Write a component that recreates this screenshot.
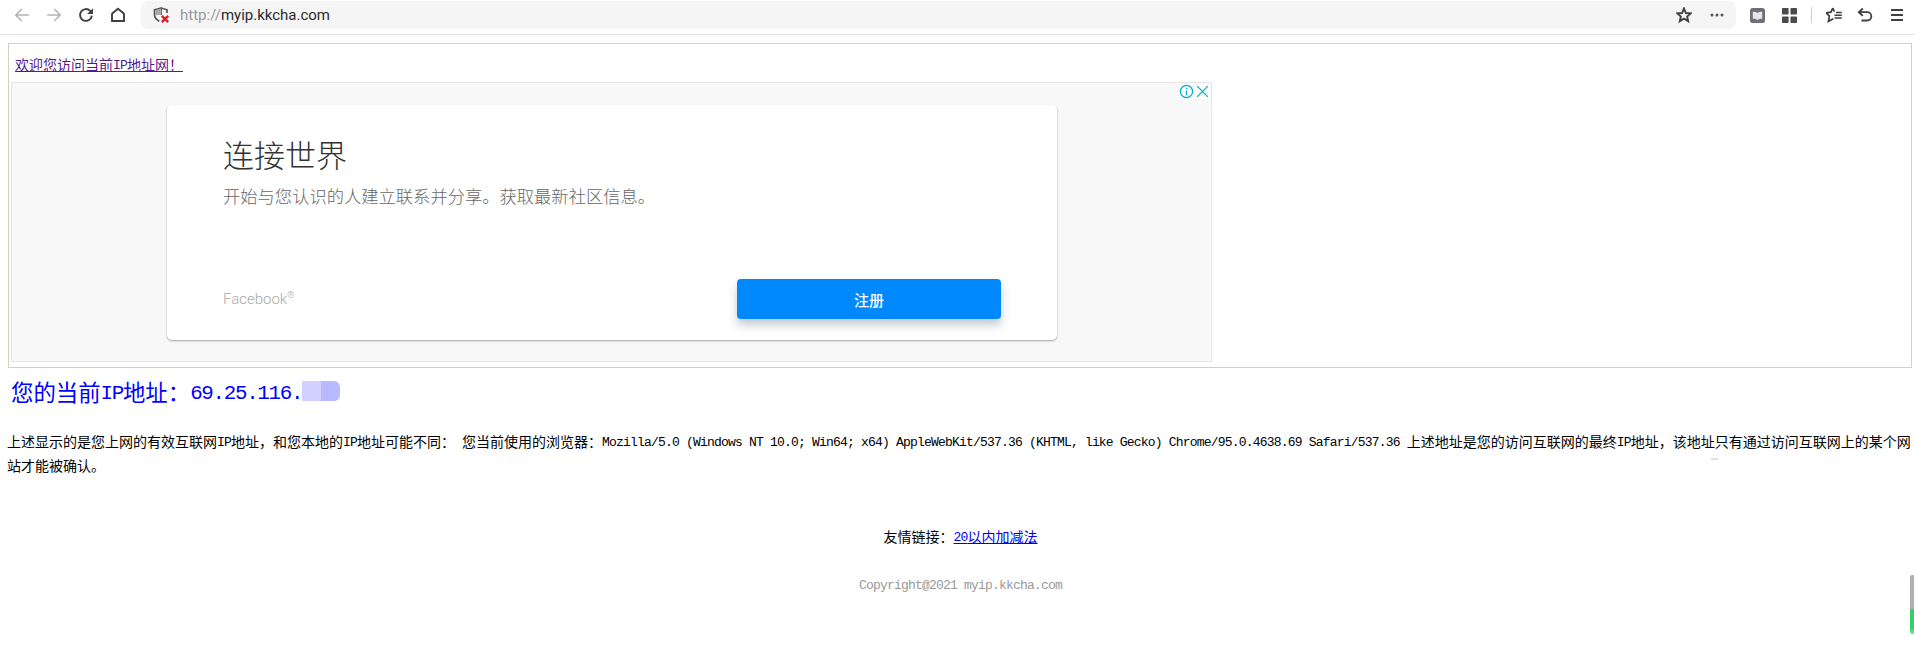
<div class="page">
  <header class="toolbar">
    <div class="nav">
      <svg class="ic dim" viewBox="0 0 16 16"><path d="M14.800 8H1.800M7.800 2 1.800 8l6 6"/></svg>
      <svg class="ic dim" viewBox="0 0 16 16"><path d="M1.200 8h13M8.200 2l6 6-6 6"/></svg>
      <svg class="ic bold" viewBox="0 0 16 16"><path d="M13.800 8.600a5.900 5.900 0 1 1-1.600-4.700L14 5.800"/><path class="fill" d="M15 1.200v5.800H9.200z"/></svg>
      <svg class="ic bold" viewBox="0 0 16 16"><path d="M2 14V7.200c0-.4.200-.7.500-1L8 1.800l5.500 4.400c.3.300.5.600.5 1V14z"/></svg>
    </div>
    <div class="urlbar">
      <svg class="shield" viewBox="0 0 18 18"><path class="sh" d="M9 9V2L2.500 3.800v4.700c0 3.300 2 5.300 4.800 6.700M9 2l6 1.800V7"/><path class="shf" d="M9 2.600v6.400H3.200V4.300z"/><path class="x" d="m9.800 9.800 6.400 6.400m0-6.400-6.400 6.400"/></svg>
      <span class="url"><span class="scheme">http://</span>myip.kkcha.com</span>
      <span class="spacer"></span>
      <svg class="ic star" viewBox="0 0 16 16"><path d="M8 1.500 9.900 6l4.800.4-3.600 3.100 1.100 4.700L8 11.700l-4.200 2.500 1.100-4.700-3.600-3.100L6.100 6z"/></svg>
      <svg class="dots" viewBox="0 0 14 4"><circle cx="2" cy="2" r="1.500"/><circle cx="7" cy="2" r="1.500"/><circle cx="12" cy="2" r="1.500"/></svg>
    </div>
    <div class="tools">
      <svg class="solid pocket" viewBox="0 0 16 16"><rect width="16" height="16" rx="3" fill="#6f6f76"/><path d="M3 4c2 0 4 .3 5 1.300C9 4.300 11 4 13 4v7.500c-2 0-4 .3-5 1.500-1-1.200-3-1.500-5-1.500z" fill="#e6e6ea"/></svg>
      <svg class="solid grid" viewBox="0 0 16 16"><g fill="#4a4a4f"><rect width="7" height="7" rx=".8"/><rect x="9" width="7" height="7" rx=".8"/><rect y="9" width="7" height="7" rx=".8"/><rect x="9" y="9" width="7" height="7" rx=".8"/></g></svg>
      <span class="sep"></span>
      <svg class="ic lib" viewBox="0 0 16 16"><path d="M6.800 1 4.900 5.200 0 5.800l3.400 3.300-1 5.200 4.900-2.600M6.800 1l1.500 3.600"/><path class="lines" d="M10 5.500h5.800M8.500 8.200h7.300M8.500 10.900h7.300"/></svg>
      <svg class="ic undo" viewBox="0 0 16 16"><path d="M5.800 1.500 1.800 5.200l4 3.700M2.200 5.200H10.200a4.100 4.100 0 0 1 0 8.300H4.500"/></svg>
      <svg class="ic menu" viewBox="0 0 16 16"><path class="thick" d="M2 3h12M2 8h12M2 13h12"/></svg>
    </div>
  </header>

  <main class="content">
    <section class="box">
      <p class="welcome"><a href="#top">欢迎您访问当前<span class="mono">IP</span>地址网！</a></p>
      <div class="ad">
        <div class="adicons">
          <svg viewBox="0 0 14 14"><circle cx="7" cy="7" r="5.700"/><path d="M7 6v4.500M7 3.500v1.200"/></svg>
          <svg viewBox="0 0 14 14"><path d="m2 2 10 10M12 2 2 12"/></svg>
        </div>
        <div class="card">
          <h2>连接世界</h2>
          <p class="desc">开始与您认识的人建立联系并分享。获取最新社区信息。</p>
          <div class="cardfoot">
            <span class="fb">Facebook<sup>®</sup></span>
            <span class="cta">注册</span>
          </div>
        </div>
      </div>
    </section>

    <h1 class="ip"><span>您的当前<span class="mono">IP</span>地址：<span class="mono">69.25.116.</span></span><span class="blur"><i></i><b></b></span></h1>

    <p class="body">上述显示的是您上网的有效互联网<span class="mono">IP</span>地址，和您本地的<span class="mono">IP</span>地址可能不同：<span class="mono">&nbsp;</span>您当前使用的浏览器：<span class="mono">Mozilla/5.0 (Windows NT 10.0; Win64; x64) AppleWebKit/537.36 (KHTML, like Gecko) Chrome/95.0.4638.69 Safari/537.36&nbsp;</span>上述地址是您的访问互联网的最终<span class="mono">IP</span>地址，该地址只有通过访问互联网上的某个网站才能被确认。</p>

    <p class="links">友情链接：<a href="#top"><span class="mono">20</span>以内加减法</a></p>
    <p class="copy"><span class="mono">Copyright@2021 myip.kkcha.com</span></p>
  </main>
  <div class="speck"></div>
  <div class="scrollmark"></div>
</div>

<style>
  :global(body) {
    margin: 0;
    background: #fff;
    overflow: hidden;
  }
  .page {
    width: 1914px;
    height: 646px;
    position: relative;
    overflow: hidden;
    font-family: "Noto Sans CJK SC", sans-serif;
    font-size: 14px;
    color: #000;
  }
  .toolbar {
    height: 35px;
    box-sizing: border-box;
    border-bottom: 1px solid #dfe4ea;
    padding-bottom: 4px;
    margin-bottom: 8px;
    display: flex;
    align-items: center;
    background: #fff;
  }
  .nav {
    display: flex;
    align-items: center;
    gap: 16px;
    padding-left: 14px;
    width: 141px;
    box-sizing: border-box;
  }
  .ic {
    width: 16px;
    height: 16px;
    fill: none;
    stroke: #3f3f44;
    stroke-width: 1.600;
    flex: none;
  }
  .ic.dim { stroke: #b4b4b6; }
  .ic.bold { stroke-width: 1.900; }
  .ic .fill { fill: #3f3f44; stroke: none; }
  .ic .thick { stroke-width: 2; }
  .ic .lines { stroke-width: 1.500; }
  .urlbar {
    width: 1595px;
    height: 28px;
    background: #f5f5f6;
    border-radius: 7px;
    display: flex;
    align-items: center;
    padding: 0 12px 0 11px;
    box-sizing: border-box;
    font-family: Roboto, "Noto Sans", sans-serif;
  }
  .shield { width: 18px; height: 18px; margin-right: 10px; flex: none; }
  .sh { fill: none; stroke: #55555a; stroke-width: 1.700; }
  .shf { fill: #a8a8ac; }
  .x { fill: none; stroke: #d8202c; stroke-width: 2.400; }
  .url { font-size: 15px; color: #2a2a2e; }
  .scheme { color: #9a9a9e; }
  .spacer { flex: 1; }
  .star { margin-right: 18px; stroke-width: 1.900; }
  .dots { width: 14px; height: 4px; fill: #55555a; flex: none; }
  .tools {
    display: flex;
    align-items: center;
    padding-left: 14px;
    flex: 1;
  }
  .solid { width: 15px; height: 15px; flex: none; }
  .pocket { margin-right: 17px; }
  .grid { margin-right: 14px; }
  .sep { width: 1px; height: 16px; background: #cfcfd2; margin-right: 14px; }
  .lib { margin-right: 15px; stroke-width: 1.700; }
  .undo { margin-right: 16px; stroke-width: 1.800; }
  .content { padding: 0 2px 0 7px; }
  .box {
    margin-left: 1px;
    height: 325px;
    box-sizing: border-box;
    border: 1px solid #d4d0c8;
    padding: 0 2px;
  }
  .welcome {
    margin: 0;
    height: 38px;
    padding-left: 4px;
    padding-top: 10px;
    box-sizing: border-box;
    line-height: 20px;
  }
  .welcome a { color: #551a8b; }
  .mono {
    font-family: "Liberation Mono", monospace;
    font-size: .93em;
    letter-spacing: -.0624em;
    line-height: 1;
    vertical-align: 1px;
  }
  .ad {
    width: 1201px;
    height: 280px;
    box-sizing: border-box;
    background: #f8f8f9;
    border: 1px solid #e6e6e6;
    position: relative;
    padding: 22px 0 0 155px;
  }
  .adicons {
    position: absolute;
    right: 1px;
    top: 1px;
    display: flex;
    gap: 1px;
    background: #fff;
  }
  .adicons svg {
    width: 15px;
    height: 15px;
    fill: none;
    stroke: #00aecd;
    stroke-width: 1.200;
  }
  .card {
    width: 890px;
    height: 235px;
    box-sizing: border-box;
    background: #fff;
    border-radius: 5px;
    box-shadow: 0 1px 2px rgba(0, 0, 0, .35);
    padding: 29px 56px 0 56px;
    display: flex;
    flex-direction: column;
  }
  h2 {
    margin: 0;
    font-size: 31px;
    font-weight: 300;
    line-height: 40px;
    color: #333;
  }
  .desc {
    margin: 9px 0 0;
    font-size: 17.300px;
    font-weight: 300;
    line-height: 26px;
    color: #666;
  }
  .cardfoot {
    margin-top: auto;
    margin-bottom: 21px;
    display: flex;
    justify-content: space-between;
    align-items: center;
  }
  .fb {
    font-family: Roboto, sans-serif;
    font-weight: 300;
    font-size: 15px;
    color: #aaa;
  }
  .fb sup { font-size: 9px; line-height: 0; }
  .cta {
    width: 264px;
    height: 40px;
    background: #0088ff;
    border-radius: 4px;
    color: #fff;
    font-size: 15px;
    font-weight: 500;
    display: flex;
    align-items: center;
    justify-content: center;
    box-shadow: 0 6px 10px rgba(60, 80, 110, .3);
  }
  .ip {
    margin: 8px 0 0 4px;
    font-size: 22.400px;
    font-weight: 400;
    line-height: 30px;
    color: #0000ff;
    display: flex;
    align-items: center;
  }
  .ip .mono { vertical-align: 2px; }
  .blur {
    display: inline-flex;
    align-items: center;
  }
  .blur i { width: 19px; height: 20px; background: #d2d0ff; display: block; }
  .blur b { width: 19px; height: 20px; background: #b9b9ff; display: block; border-radius: 0 6px 6px 0; }
  .body {
    margin: 23px 0 0;
    line-height: 24px;
    font-size: 14px;
  }
  .links {
    margin: 49px 0 0;
    text-align: center;
    line-height: 20px;
    padding-left: 2px;
  }
  .links a { color: #0000ee; }
  .copy {
    margin: 28px 0 0;
    text-align: center;
    line-height: 20px;
    color: #999;
    padding-left: 2px;
  }
  .speck {
    position: absolute;
    left: 1711px;
    top: 458px;
    width: 7px;
    height: 2px;
    background: #e2e2e2;
  }
  .scrollmark {
    position: absolute;
    left: 1910px;
    top: 575px;
    width: 4px;
    height: 59px;
    border-radius: 2px 0 0 2px;
    background: linear-gradient(#b0b0b0 0 57%, #2fd268 57% 90%, #7be59d);
  }
</style>
